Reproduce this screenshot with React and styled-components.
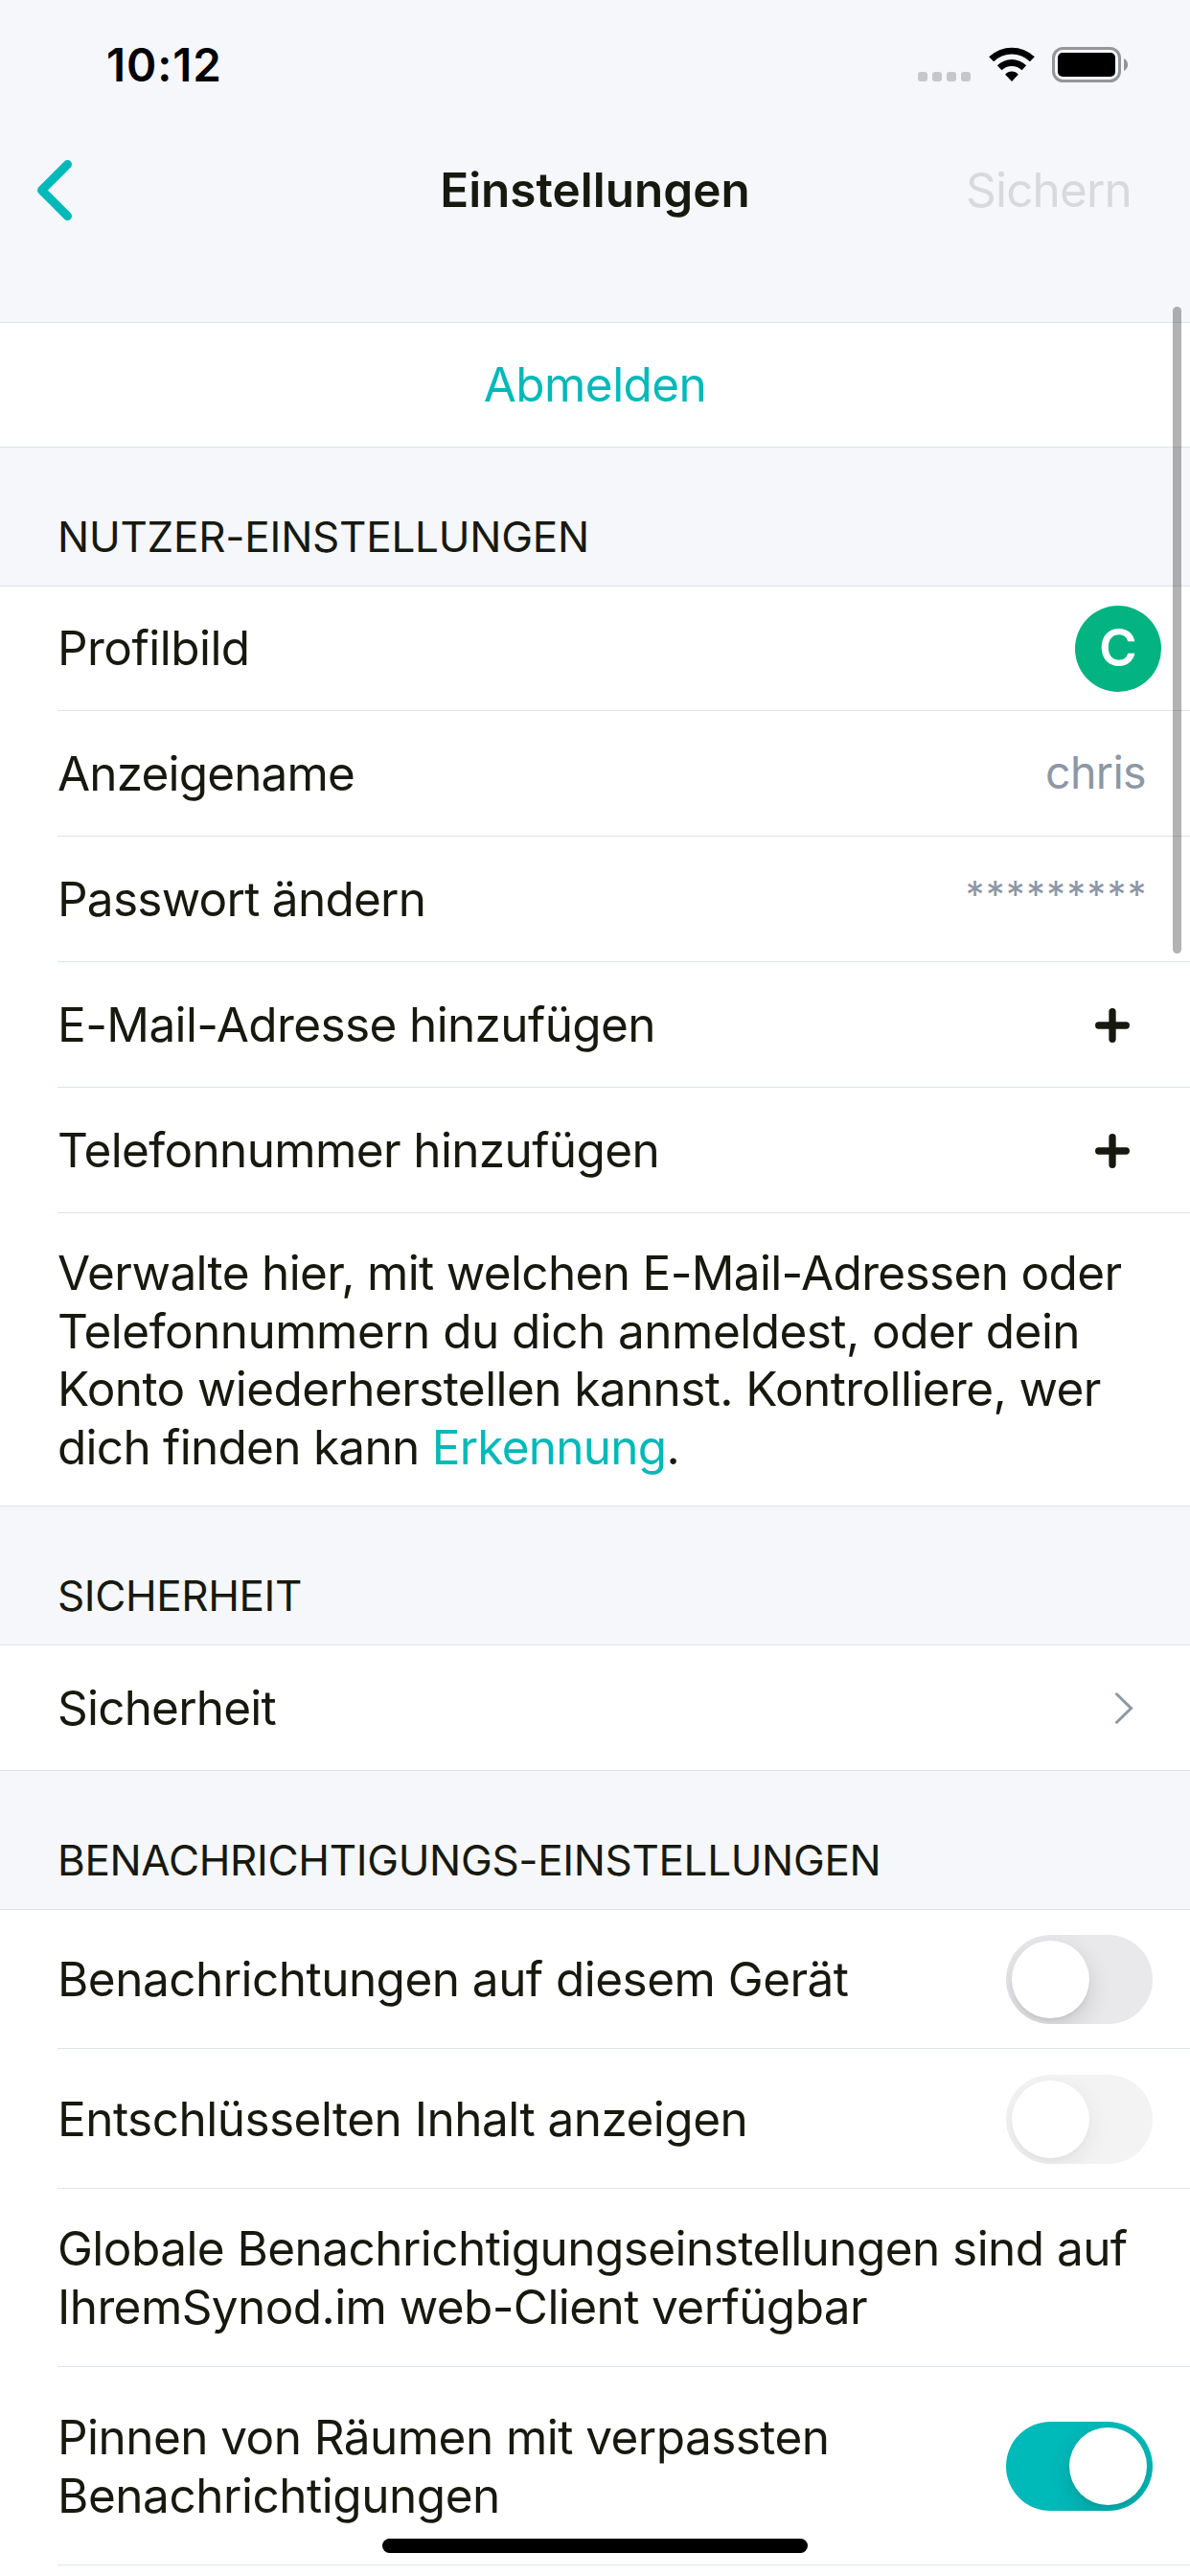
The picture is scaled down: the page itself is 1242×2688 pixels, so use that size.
import React, { useState } from "react";
import styled, { createGlobalStyle } from "styled-components";

const color = {
  canvas: "#f5f7fb",
  surface: "#ffffff",
  line: "#dde4ee",
  text: "#17190f",
  muted: "#8e97a5",
  disabled: "#d8d9db",
  accent: "#00b9b9",
  avatar: "#03b381",
};

const GlobalStyle = createGlobalStyle`
  *, *::before, *::after { box-sizing: border-box; }
  body { margin: 0; background: ${color.canvas}; }
  button { border: 0; padding: 0; margin: 0; background: none; font: inherit; color: inherit; text-align: left; }
`;

const Screen = styled.div`
  position: relative;
  width: 1242px;
  height: 2688px;
  overflow: hidden;
  background: ${color.canvas};
  color: ${color.text};
  font-family: Inter, "Liberation Sans", sans-serif;
  font-size: 49.5px;
  line-height: 60.67px;
`;

const Text = styled.span`
  letter-spacing: ${(p) => p.$tracking || 0}px;
  white-space: nowrap;
`;

const Line = styled(Text)`
  display: block;
`;

/* Status bar */
const StatusBar = styled.div`
  display: flex;
  justify-content: space-between;
  align-items: flex-start;
  height: 132px;
  padding: 38px 65px 0 111px;
`;

const Clock = styled.span`
  font-size: 47.5px;
  font-weight: 600;
  line-height: 60px;
  letter-spacing: 0.9px;
  color: #000;
`;

const Indicators = styled.div`
  display: flex;
  align-items: flex-end;
  height: 37px;
  margin-top: 11px;
`;

const SignalDots = styled.div`
  display: flex;
  gap: 5px;
  margin: 0 18.5px 1px 0;
`;

const Dot = styled.i`
  width: 10px;
  height: 10px;
  border-radius: 3px;
  background: #c5c7ca;
`;

const WifiSvg = styled.svg`
  width: 48px;
  height: 36px;
  margin: 0 18.5px 1px 0;
`;

const BatterySvg = styled.svg`
  width: 79px;
  height: 37px;
`;

/* Navigation */
const NavBar = styled.header`
  display: grid;
  grid-template-columns: 1fr auto 1fr;
  align-items: center;
  height: 132px;
  padding: 0 61px 0 38px;
  margin-bottom: 72px;
`;

const BackButton = styled.button`
  display: flex;
  width: 40px;
  height: 66px;
`;

const Title = styled.h1`
  margin: 0 0 0 23px;
  font-size: inherit;
  font-weight: 600;
`;

const SaveButton = styled.button`
  justify-self: end;
  color: ${color.disabled};
  letter-spacing: -0.84px;
`;

/* Grouped table */
const Group = styled.section`
  background: ${color.surface};
  border: solid ${color.line};
  border-width: 1px 0;
`;

const SectionTitle = styled.h2`
  height: 144px;
  margin: 0;
  padding: 66px 60px 0;
  font-size: 44px;
  font-weight: 400;
  line-height: 54px;
`;

const SignOut = styled.button`
  display: flex;
  align-items: center;
  justify-content: center;
  width: 100%;
  height: 129px;
  color: ${color.accent};
`;

const Row = styled.div`
  display: flex;
  align-items: center;
  justify-content: space-between;
  height: ${(p) => p.$height || 131}px;
  margin-left: 60px;
  padding-top: ${(p) => p.$top || 0}px;
  padding-right: ${(p) => p.$end || 0}px;
  border-bottom: ${(p) => (p.$last ? 0 : 1)}px solid ${color.line};
`;

const NoteRow = styled.div`
  height: ${(p) => p.$height}px;
  margin-left: 60px;
  padding-top: 32px;
  border-bottom: ${(p) => (p.$last ? 0 : 1)}px solid ${color.line};
`;

const Link = styled.a`
  color: ${color.accent};
`;

const Value = styled.span`
  color: ${color.muted};
  font-size: 46.5px;
  letter-spacing: -0.64px;
  padding-bottom: 3px;
`;

const Mask = styled(Value)`
  font-size: 39px;
  letter-spacing: 1.6px;
  padding-bottom: 8px;
`;

const Avatar = styled.span`
  display: flex;
  align-items: center;
  justify-content: center;
  width: 90px;
  height: 90px;
  border-radius: 50%;
  background: ${color.avatar};
  color: #fff;
  font-size: 54px;
  font-weight: 600;
`;

const Track = styled.button`
  display: flex;
  justify-content: ${(p) => (p.$on ? "flex-end" : "flex-start")};
  width: 153px;
  height: 93px;
  padding: 6px;
  border-radius: 47px;
  overflow: hidden;
  background: ${(p) => (p.$on ? color.accent : "#e9e9eb")};
  opacity: ${(p) => (p.disabled ? 0.5 : 1)};
`;

const Thumb = styled.span`
  width: 81px;
  height: 81px;
  border-radius: 50%;
  background: #fff;
  box-shadow: 0 9px 24px rgba(0, 0, 0, 0.15), 0 3px 3px rgba(0, 0, 0, 0.04);
`;

/* Overlays */
const ScrollThumb = styled.div`
  position: absolute;
  top: 320px;
  right: 9px;
  width: 9px;
  height: 675px;
  border-radius: 5px;
  background: rgba(0, 0, 0, 0.3);
`;

const HomeIndicator = styled.div`
  position: absolute;
  bottom: 24px;
  left: 399px;
  width: 444px;
  height: 15px;
  border-radius: 8px;
  background: #000;
`;

const WifiIcon = () => (
  <WifiSvg viewBox="0 0 143 108" fill="#000">
    <path d="M0 31A103 103 0 0 1 143 31L128 46A80 80 0 0 0 15 46Z" />
    <path d="M26 58A64 64 0 0 1 117 58L103 73A44 44 0 0 0 40 73Z" />
    <path d="M51 86A27 27 0 0 1 92 86L71.500 108Z" />
  </WifiSvg>
);

const BatteryIcon = () => (
  <BatterySvg viewBox="0 0 79 37">
    <rect x="1.500" y="1.500" width="69" height="34" rx="10" fill="none" stroke="#949598" strokeWidth="3" />
    <rect x="6" y="6" width="60" height="25" rx="5" fill="#000" />
    <path d="M75 12C80.500 15 80.500 22 75 25Z" fill="#949598" />
  </BatterySvg>
);

const BackIcon = () => (
  <svg width="40" height="66" viewBox="0 0 40 66" fill="none" stroke={color.accent} strokeWidth="9" strokeLinecap="round" strokeLinejoin="round">
    <path d="M32.500 6.500L5.500 33.500L32.500 60.500" />
  </svg>
);

const PlusIcon = () => (
  <svg width="36" height="36" viewBox="0 0 36 36" stroke={color.text} strokeWidth="7.300" strokeLinecap="round">
    <path d="M18 3.700V32.300M3.700 18H32.300" />
  </svg>
);

const DisclosureIcon = () => (
  <svg width="19" height="33" viewBox="0 0 19 33" fill="none" stroke={color.muted} strokeWidth="3" strokeLinecap="round">
    <path d="M1.500 1.800L16.500 16.500L1.500 31.200" />
  </svg>
);

function Switch({ initial = false, disabled = false }) {
  const [on, setOn] = useState(initial);
  return (
    <Track type="button" role="switch" aria-checked={on} $on={on} disabled={disabled} onClick={() => setOn(!on)}>
      <Thumb />
    </Track>
  );
}

export default function App() {
  return (
    <>
      <GlobalStyle />
      <Screen>
        <StatusBar>
          <Clock>10:12</Clock>
          <Indicators>
            <SignalDots>
              <Dot />
              <Dot />
              <Dot />
              <Dot />
            </SignalDots>
            <WifiIcon />
            <BatteryIcon />
          </Indicators>
        </StatusBar>

        <NavBar>
          <BackButton type="button" aria-label="Zurück">
            <BackIcon />
          </BackButton>
          <Title>Einstellungen</Title>
          <SaveButton type="button" disabled>Sichern</SaveButton>
        </NavBar>

        <Group>
          <SignOut type="button">
            <Text $tracking={-0.59}>Abmelden</Text>
          </SignOut>
        </Group>

        <SectionTitle>
          <Text $tracking={-0.23}>NUTZER-EINSTELLUNGEN</Text>
        </SectionTitle>
        <Group>
          <Row $height={130} $end={30}>
            <Text $tracking={-0.54}>Profilbild</Text>
            <Avatar>C</Avatar>
          </Row>
          <Row $top={1} $end={46}>
            <Text $tracking={-0.84}>Anzeigename</Text>
            <Value>chris</Value>
          </Row>
          <Row $top={1} $end={44}>
            <Text $tracking={-0.74}>Passwort ändern</Text>
            <Mask>*********</Mask>
          </Row>
          <Row $top={1} $end={63}>
            <Text $tracking={-0.62}>E-Mail-Adresse hinzufügen</Text>
            <PlusIcon />
          </Row>
          <Row $top={1} $end={63}>
            <Text $tracking={-0.64}>Telefonnummer hinzufügen</Text>
            <PlusIcon />
          </Row>
          <NoteRow $height={305} $last>
            <Line $tracking={-0.66}>Verwalte hier, mit welchen E-Mail-Adressen oder</Line>
            <Line $tracking={-0.54}>Telefonnummern du dich anmeldest, oder dein</Line>
            <Line $tracking={-0.6}>Konto wiederherstellen kannst. Kontrolliere, wer</Line>
            <Line $tracking={-0.73}>
              dich finden kann <Link>Erkennung</Link>.
            </Line>
          </NoteRow>
        </Group>

        <SectionTitle>
          <Text $tracking={-0.41}>SICHERHEIT</Text>
        </SectionTitle>
        <Group>
          <Row $height={130} $end={59} $last>
            <Text $tracking={-0.8}>Sicherheit</Text>
            <DisclosureIcon />
          </Row>
        </Group>

        <SectionTitle>
          <Text $tracking={-0.34}>BENACHRICHTIGUNGS-EINSTELLUNGEN</Text>
        </SectionTitle>
        <Group>
          <Row $height={145} $top={1} $end={39}>
            <Text $tracking={-0.53}>Benachrichtungen auf diesem Gerät</Text>
            <Switch />
          </Row>
          <Row $height={146} $top={2} $end={39}>
            <Text $tracking={-0.53}>Entschlüsselten Inhalt anzeigen</Text>
            <Switch disabled />
          </Row>
          <NoteRow $height={186}>
            <Line $tracking={-0.56}>Globale Benachrichtigungseinstellungen sind auf</Line>
            <Line $tracking={-0.59}>IhremSynod.im web-Client verfügbar</Line>
          </NoteRow>
          <Row $height={207} $top={1} $end={39}>
            <div>
              <Line $tracking={-0.55}>Pinnen von Räumen mit verpassten</Line>
              <Line $tracking={-0.47}>Benachrichtigungen</Line>
            </div>
            <Switch initial />
          </Row>
          <Row />
        </Group>

        <ScrollThumb />
        <HomeIndicator />
      </Screen>
    </>
  );
}
